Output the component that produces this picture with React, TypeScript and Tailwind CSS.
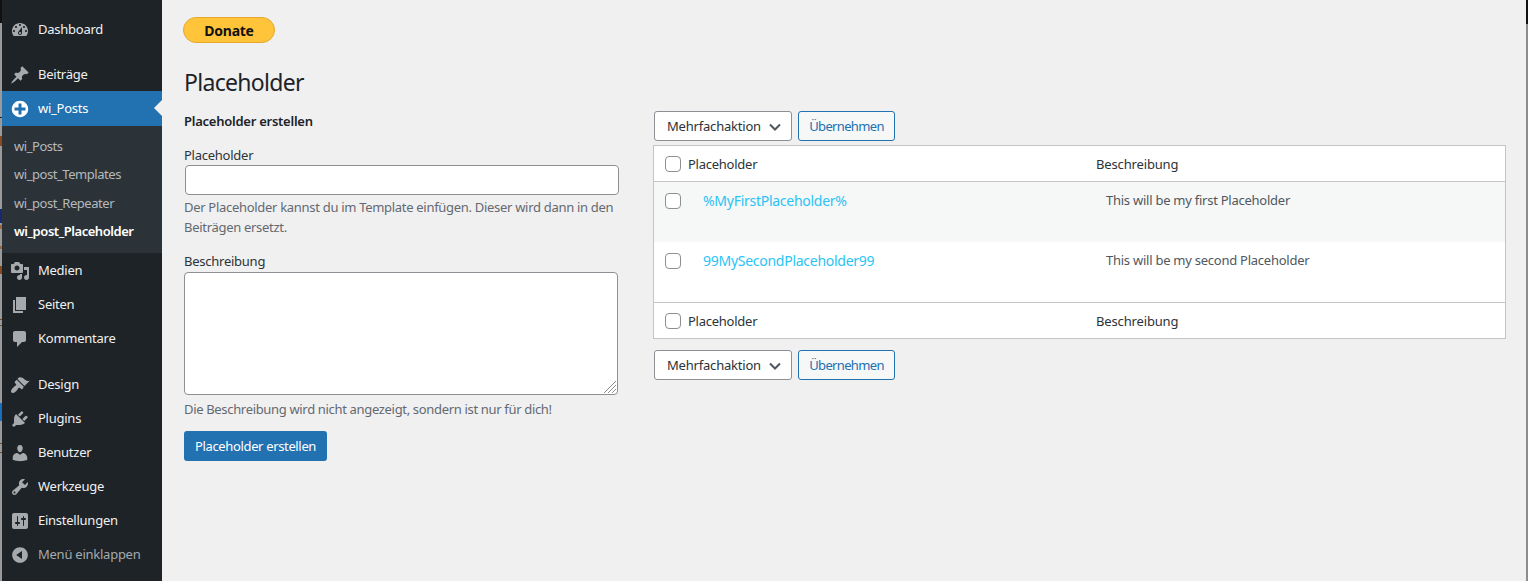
const icons = {
  dashboard:
    'M3.76 16h12.48c1.1-1.37 1.76-3.11 1.76-5 0-4.42-3.58-8-8-8s-8 3.58-8 8c0 1.89.66 3.63 1.76 5zM10 4c.55 0 1 .45 1 1s-.45 1-1 1-1-.45-1-1 .45-1 1-1zM6 6c.55 0 1 .45 1 1s-.45 1-1 1-1-.45-1-1 .45-1 1-1zm8 0c.55 0 1 .45 1 1s-.45 1-1 1-1-.45-1-1 .45-1 1-1zm-5.37 5.55L12 7v6c0 1.1-.9 2-2 2s-2-.9-2-2c0-.57.24-1.08.63-1.45zM4 10c.55 0 1 .45 1 1s-.45 1-1 1-1-.45-1-1 .45-1 1-1zm12 0c.55 0 1 .45 1 1s-.45 1-1 1-1-.45-1-1 .45-1 1-1zm-5 3c0-.55-.45-1-1-1s-1 .45-1 1 .45 1 1 1 1-.45 1-1z',
  post: 'M10.44 3.02l1.82-1.82 6.36 6.35-1.83 1.82c-1.05-.68-2.48-.57-3.41.36l-.75.75c-.92.93-1.04 2.35-.35 3.41l-1.83 1.82-2.41-2.41-2.8 2.79c-.42.42-3.38 2.71-3.8 2.29s1.86-3.39 2.28-3.81l2.79-2.79L4.1 9.36l1.83-1.82c1.05.69 2.48.57 3.4-.36l.75-.75c.93-.92 1.05-2.35.36-3.41z',
  plus: 'M15.8 4.2c3.2 3.21 3.2 8.39 0 11.6-3.21 3.2-8.39 3.2-11.6 0C1 12.59 1 7.41 4.2 4.2 7.41 1 12.59 1 15.8 4.2zm-4.3 11.3v-4h4v-3h-4v-4h-3v4h-4v3h4v4h3z',
  media:
    'M13 11V4c0-.55-.45-1-1-1h-1.67L9 1H5L3.67 3H2c-.55 0-1 .45-1 1v7c0 .55.45 1 1 1h10c.55 0 1-.45 1-1zM7 4.5c1.38 0 2.5 1.12 2.5 2.5S8.38 9.5 7 9.5 4.5 8.38 4.5 7 5.62 4.5 7 4.5zM14 6h5v10.5c0 1.38-1.12 2.5-2.5 2.5S14 17.88 14 16.5s1.12-2.5 2.5-2.5c.17 0 .34.02.5.05V9h-3V6zm-4 8.05V13h2v3.5c0 1.38-1.12 2.5-2.5 2.5S7 17.88 7 16.5 8.12 14 9.5 14c.17 0 .34.02.5.05z',
  page: 'M6 15V2h10v13H6zm-1 1h8v2H3V5h2v11z',
  comments: 'M5 2h9c1.1 0 2 .9 2 2v7c0 1.1-.9 2-2 2h-2l-5 5v-5H5c-1.1 0-2-.9-2-2V4c0-1.1.9-2 2-2z',
  appearance:
    'M14.48 11.06L7.41 3.99l1.5-1.5c.5-.56 2.3-.47 3.51.32 1.21.8 1.43 1.28 2.91 2.1 1.18.64 2.45 1.26 4.45.85zm-.71.71L6.7 4.7 4.93 6.47c-.39.39-.39 1.02 0 1.41l1.06 1.06c.39.39.39 1.03 0 1.42-.6.6-1.43 1.11-2.21 1.69-.35.26-.7.53-1.01.84-1.35 1.35-1.77 2.92-1.77 3.41 0 .45.18.89.5 1.21.32.32.76.5 1.21.5.49 0 2.06-.42 3.41-1.77.31-.31.58-.66.84-1.01.58-.78 1.09-1.61 1.69-2.21.39-.39 1.03-.39 1.42 0l1.06 1.06c.39.39 1.02.39 1.41 0z',
  plugins:
    'M13.11 4.36L9.87 7.6 8 5.73l3.24-3.24c.35-.34 1.05-.2 1.56.32.52.51.66 1.21.31 1.55zm-8 1.77l.91-1.12 9.01 9.01-1.19.84c-.71.71-2.63 1.16-3.82 1.16H6.14L4.9 17.26c-.59.59-1.54.59-2.12 0-.59-.58-.59-1.53 0-2.12l1.24-1.24v-3.88c0-1.13.4-3.19 1.09-3.89zm7.26 3.97l3.24-3.24c.34-.35 1.04-.21 1.55.31.52.51.66 1.21.31 1.55l-3.24 3.25z',
  users:
    'M10 9.25c-2.27 0-2.73-3.44-2.73-3.44C7 4.02 7.82 2 9.97 2c2.16 0 2.98 2.02 2.71 3.81 0 0-.41 3.44-2.68 3.44zm0 2.57L12.72 10c2.39 0 4.52 2.33 4.52 4.53v2.49s-3.65 1.13-7.24 1.13c-3.65 0-7.24-1.13-7.24-1.13v-2.49c0-2.25 1.94-4.48 4.47-4.48z',
  tools:
    'M16.68 9.77c-1.34 1.34-3.3 1.67-4.95.99l-5.41 6.52c-.99.99-2.59.99-3.58 0s-.99-2.59 0-3.57l6.52-5.42c-.68-1.65-.35-3.61.99-4.95 1.28-1.28 3.12-1.62 4.72-1.06l-2.89 2.89 2.82 2.82 2.86-2.87c.53 1.58.18 3.39-1.08 4.65zM3.81 16.21c.4.39 1.04.39 1.43 0 .4-.4.4-1.04 0-1.43-.39-.4-1.03-.4-1.43 0-.39.39-.39 1.03 0 1.43z',
  settings:
    'M18 16V4c0-1.1-.9-2-2-2H4c-1.1 0-2 .9-2 2v12c0 1.1.9 2 2 2h12c1.1 0 2-.9 2-2zM8 11h1c.55 0 1 .45 1 1s-.45 1-1 1H8v1.5c0 .28-.22.5-.5.5s-.5-.22-.5-.5V13H6c-.55 0-1-.45-1-1s.45-1 1-1h1V5.5c0-.28.22-.5.5-.5s.5.22.5.5V11zm5-2h-1c-.55 0-1-.45-1-1s.45-1 1-1h1V5.5c0-.28.22-.5.5-.5s.5.22.5.5V7h1c.55 0 1 .45 1 1s-.45 1-1 1h-1v5.5c0 .28-.22.5-.5.5s-.5-.22-.5-.5V9z',
  collapse:
    'M10 2.16c4.33 0 7.84 3.51 7.84 7.84s-3.51 7.84-7.84 7.84S2.16 14.33 2.16 10 5.71 2.16 10 2.16zm2 11.72V6.12L6.18 9.97z',
};

// bits of the window behind that show along the left edge
const stripBits = [
  'h-[23px] bg-[#111]',
  'h-[94px] bg-[#9a9a9a]',
  'h-[1px] bg-[#222]',
  'h-[18px] bg-[#9a9a9a]',
  'h-[10px] bg-[#8a4a20]',
  'h-[63px] bg-[#9a9a9a]',
  'h-[14px] bg-[#1a2a70]',
  'h-[2px] bg-[#9a9a9a]',
  'h-[4px] bg-[#a06a40]',
  'h-[17px] bg-[#9a9a9a]',
  'h-[3px] bg-[#a06a40]',
  'h-[17px] bg-[#9a9a9a]',
  'h-[8px] bg-[#8a4a20]',
  'h-[45px] bg-[#9a9a9a]',
  'h-[1px] bg-[#7a4a20]',
  'h-[5px] bg-[#9a9a9a]',
  'h-[1px] bg-[#7a4a20]',
  'h-[77px] bg-[#9a9a9a]',
  'h-[18px] bg-[#1a6ec0]',
  'h-[22px] bg-[#9a9a9a]',
  'h-[1px] bg-[#7a4a20]',
  'h-[8px] bg-[#9a9a9a]',
  'h-[1px] bg-[#7a4a20]',
  'flex-1 bg-[#9a9a9a]',
];

const Icon = ({ d, white }: { d: string; white?: boolean }) => (
  <svg
    viewBox="0 0 20 20"
    className={`w-5 h-5 shrink-0 ${white ? 'fill-white' : 'fill-[#a7aaad]'}`}
  >
    <path d={d} />
  </svg>
);

const MenuItem = ({ icon, label, className, white }: { icon: string; label: string; className?: string; white?: boolean }) => (
  <div className={`flex items-center h-[34px] pl-[8px] text-[#f0f0f1] ${className ?? ''}`}>
    <Icon d={icon} white={white} />
    <span className="ml-[8px]">{label}</span>
  </div>
);

const Checkbox = () => (
  <span className="block w-4 h-4 shrink-0 rounded-[4px] border border-[#8c8f94] bg-white" />
);

const Actions = () => (
  <div className="flex gap-[6px]">
    <div className="flex items-center justify-between w-[138px] h-[30px] pl-3 pr-[8px] pt-[1px] bg-white border border-[#8c8f94] rounded-[3px] text-[#2c3338] tracking-[-0.2px]">
      Mehrfachaktion
      <svg viewBox="0 0 16 16" className="w-4 h-4 fill-none stroke-[#50575e] stroke-2">
        <path d="M3 5.5l5 5 5-5" />
      </svg>
    </div>
    <div className="flex items-center justify-center w-[97px] h-[30px] pt-[1px] bg-[#f6f7f7] border border-[#2271b1] rounded-[3px] text-[#2271b1] tracking-[-0.65px]">
      Übernehmen
    </div>
  </div>
);

const HeadRow = ({ className }: { className: string }) => (
  <div className={`flex items-center h-[36px] border-[#c3c4c7] text-[#2c3338] ${className}`}>
    <div className="flex items-center w-[442px] pl-[11px]">
      <Checkbox />
      <span className="ml-[7px] pt-[2px]">Placeholder</span>
    </div>
    <span className="pt-[2px] tracking-[-0.15px]">Beschreibung</span>
  </div>
);

const Row = ({ name, text, className }: { name: string; text: string; className?: string }) => (
  <div className={`flex h-[60px] pt-[10px] ${className ?? ''}`}>
    <div className="flex w-[452px] pl-[11px]">
      <span className="mt-[1px]">
        <Checkbox />
      </span>
      <span className="ml-[22px] text-[14px] leading-[18px] tracking-[-0.27px] text-[#2ac4f4]">{name}</span>
    </div>
    <span className="-mt-[1px] leading-[18px] text-[#50575e]">{text}</span>
  </div>
);

export default function App() {
  return (
    <div className="flex h-[581px] w-[1528px] overflow-hidden bg-[#f0f0f1] text-[13px] font-['Noto_Sans','Open_Sans',sans-serif] tracking-[-0.25px]">
      <div className="flex flex-col w-[2px] shrink-0">
        {stripBits.map((bit, index) => (
          <span key={index} className={`block w-full ${bit}`} />
        ))}
      </div>

      <aside className="w-[160px] shrink-0 flex flex-col bg-[#1d2327]">
        <div className="mt-[13px]">
          <MenuItem icon={icons.dashboard} label="Dashboard" />
        </div>
        <MenuItem icon={icons.post} label="Beiträge" className="mt-[11px]" />
        <div className="relative -mt-[1px]">
          <MenuItem icon={icons.plus} label="wi_Posts" white className="h-[35px] bg-[#2271b1] !text-white" />
          <span className="absolute right-0 top-[9px] border-y-[8px] border-r-[8px] border-y-transparent border-r-[#f0f0f1]" />
        </div>
        <div className="flex flex-col h-[127px] pt-[6px] pl-[12px] bg-[#2c3338] text-[#b4b9be] tracking-[-0.45px]">
          <span className="h-[28.3px] leading-[28px]">wi_Posts</span>
          <span className="h-[28.3px] leading-[28px]">wi_post_Templates</span>
          <span className="h-[28.3px] leading-[28px]">wi_post_Repeater</span>
          <span className="h-[28.3px] leading-[28px] font-semibold text-white">wi_post_Placeholder</span>
        </div>
        <MenuItem icon={icons.media} label="Medien" className="mt-[1px]" />
        <MenuItem icon={icons.page} label="Seiten" />
        <MenuItem icon={icons.comments} label="Kommentare" />
        <MenuItem icon={icons.appearance} label="Design" className="mt-[12px]" />
        <MenuItem icon={icons.plugins} label="Plugins" />
        <MenuItem icon={icons.users} label="Benutzer" />
        <MenuItem icon={icons.tools} label="Werkzeuge" />
        <MenuItem icon={icons.settings} label="Einstellungen" />
        <MenuItem icon={icons.collapse} label="Menü einklappen" className="!text-[#a7aaad]" />
      </aside>

      <main className="flex-1 pl-[22px] pt-[17px]">
        <div className="-ml-[1px] flex items-center justify-center w-[92px] h-[26px] rounded-full border border-[#e5a92b] bg-[#ffc439] text-[14px] font-bold text-[#111]">
          Donate
        </div>
        <h1 className="mt-[23px] text-[23px] leading-[32px] tracking-[-0.7px] text-[#1d2327]">Placeholder</h1>
        <div className="flex mt-[13px]">
          <div className="w-[470px] shrink-0">
            <h2 className="mt-[1px] text-[13px] leading-[18px] font-semibold text-[#1d2327]">Placeholder erstellen</h2>
            <div className="mt-[16px]">
              <div className="leading-[18px] text-[#2c3338]">Placeholder</div>
              <div className="ml-[1px] w-[434px] h-[30px] mt-[1px] bg-white border border-[#8c8f94] rounded-[4px]" />
              <p className="mt-[2px] w-[440px] leading-[20px] tracking-[-0.3px] text-[#646970]">
                Der Placeholder kannst du im Template einfügen. Dieser wird dann in den Beiträgen ersetzt.
              </p>
            </div>
            <div className="mt-[15px]">
              <div className="leading-[18px] text-[#2c3338]">Beschreibung</div>
              <div className="relative w-[434px] h-[123px] mt-[2px] bg-white border border-[#8c8f94] rounded-[4px]">
                <svg viewBox="0 0 14 14" className="absolute right-0 bottom-0 w-[14px] h-[14px] stroke-[#8c8f94] stroke-1">
                  <path d="M1 13L13 1M5 13l8-8M9 13l4-4" />
                </svg>
              </div>
              <p className="mt-[5px] leading-[18px] tracking-[-0.33px] text-[#646970]">
                Die Beschreibung wird nicht angezeigt, sondern ist nur für dich!
              </p>
            </div>
            <div className="flex items-center justify-center mt-[13px] w-[143px] h-[30px] pt-[1px] bg-[#2271b1] rounded-[3px] text-white tracking-[-0.35px]">
              Placeholder erstellen
            </div>
          </div>

          <div className="flex-1 flex flex-col">
            <Actions />
            <div className="w-[853px] -ml-[1px] mt-[4px] mb-[11px] bg-white border border-[#c3c4c7]">
              <HeadRow className="border-b" />
              <Row
                name="%MyFirstPlaceholder%"
                text="This will be my first Placeholder"
                className="bg-[#f6f7f7]"
              />
              <Row name="99MySecondPlaceholder99" text="This will be my second Placeholder" />
              <HeadRow className="border-t" />
            </div>
            <Actions />
          </div>
        </div>
      </main>

      <div className="flex flex-col w-[2px] shrink-0">
        <span className="block h-[24px] bg-[#111]" />
        <span className="block flex-1 bg-[#8c8c8c]" />
      </div>
    </div>
  );
}
